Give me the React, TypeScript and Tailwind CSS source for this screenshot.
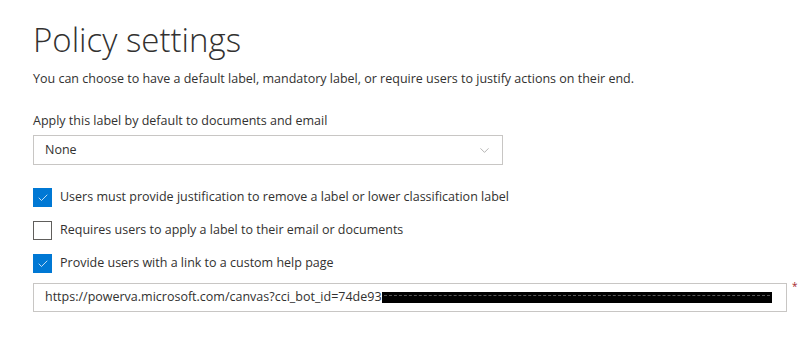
import { Check, ChevronDown } from 'lucide-react';

const font = { fontFamily: '"Open Sans", "Noto Sans", sans-serif' };

function Checkbox({ checked, label }: { checked: boolean; label: string }) {
  return (
    <div className="flex items-center gap-[8px] h-[19px]">
      <span
        className={`w-[19px] h-[19px] shrink-0 flex items-center justify-center ${
          checked ? 'bg-[#0078d4]' : 'border border-[#605e5c] bg-white'
        }`}
      >
        {checked && <Check size={12} strokeWidth={1.5} color="#ffffff" />}
      </span>
      <span className="text-[12.5px] text-[#323130] leading-none">{label}</span>
    </div>
  );
}

export default function App() {
  return (
    <div className="w-[810px] h-[337px] bg-white pl-[33px] pt-[20px]" style={font}>
      <h1 className="text-[33px] font-light text-[#323130] leading-[40px]">Policy settings</h1>
      <p className="mt-[11px] text-[12.5px] text-[#323130] leading-[16px]">
        You can choose to have a default label, mandatory label, or require users to justify actions on their end.
      </p>

      <div className="mt-[26px] text-[12.5px] text-[#323130] leading-[16px]">
        Apply this label by default to documents and email
      </div>
      <div className="mt-[6px] w-[470px] h-[30px] border border-[#c8c6c4] flex items-center justify-between pl-[11px] pr-[10px]">
        <span className="text-[12.5px] text-[#323130]">None</span>
        <ChevronDown size={15} strokeWidth={1} color="#8a8886" />
      </div>

      <div className="mt-[23px] flex flex-col gap-[14px]">
        <Checkbox checked label="Users must provide justification to remove a label or lower classification label" />
        <Checkbox checked={false} label="Requires users to apply a label to their email or documents" />
        <Checkbox checked label="Provide users with a link to a custom help page" />
      </div>

      <div className="mt-[10px] flex items-start">
        <div className="w-[754px] h-[29px] border border-[#c8c6c4] flex items-center pl-[11px] pr-[14px]">
          <span className="text-[12.5px] text-[#323130] whitespace-nowrap">
            https://powerva.microsoft.com/canvas?cci_bot_id=74de93
          </span>
          <span className="h-[11px] flex-1 bg-black flex items-start pt-[3px] px-[2px]">
            <span className="w-full border-t border-dashed border-[#555]" />
          </span>
        </div>
        <span className="ml-[5px] mt-[-2px] text-[10px] text-[#a4262c] leading-none">*</span>
      </div>
    </div>
  );
}
